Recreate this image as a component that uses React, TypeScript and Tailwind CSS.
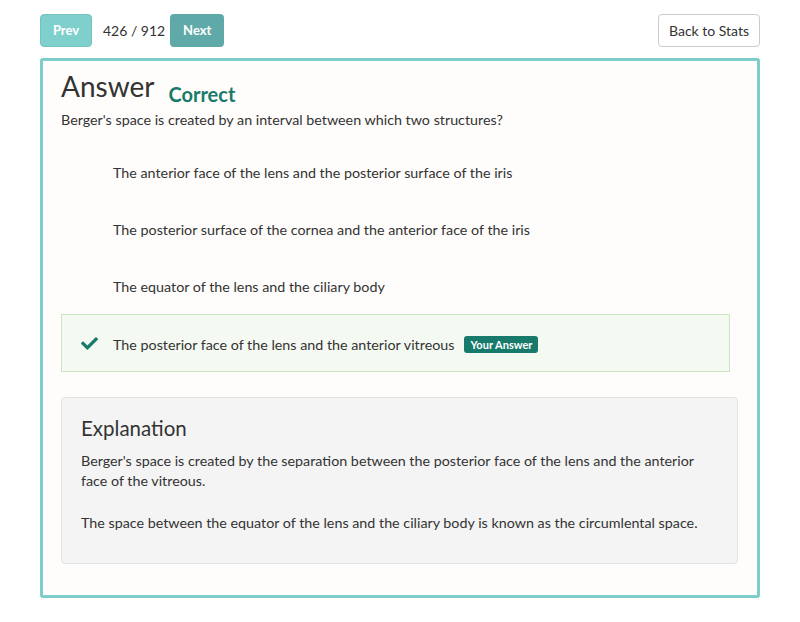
import React from "react";

const Check = ({ color }: { color: string }) => (
  <svg width="21" height="17" viewBox="0 0 512 512" className="shrink-0">
    <path fill={color} d="M173.898 439.404l-166.4-166.4c-9.997-9.997-9.997-26.206 0-36.204l36.203-36.204c9.997-9.998 26.207-9.998 36.204 0L192 312.69 432.095 72.596c9.997-9.997 26.207-9.997 36.204 0l36.203 36.204c9.997 9.997 9.997 26.206 0 36.204l-294.4 294.401c-9.998 9.997-26.207 9.997-36.204-.001z" />
  </svg>
);

export default function App() {
  const options = [
    "The anterior face of the lens and the posterior surface of the iris",
    "The posterior surface of the cornea and the anterior face of the iris",
    "The equator of the lens and the ciliary body",
  ];
  return (
    <div className="w-[800px] h-[622px] bg-white text-[#333] text-[14.3px]" style={{ fontFamily: "Lato, 'Noto Sans', sans-serif" }}>
      <div className="px-[40px] pt-[14px]">
        <div className="flex items-center h-[33px]">
          <button className="h-[33px] w-[52px] rounded-[4px] bg-[#7fcfcd] border border-[#74c3c1] text-white font-bold text-[13px] pt-[1px]">Prev</button>
          <span className="ml-[11px] mr-[5px] text-[14px] text-[#333]">426 / 912</span>
          <button className="h-[33px] w-[54px] rounded-[4px] bg-[#5faaa8] text-white font-bold text-[13px] pt-[1px]">Next</button>
          <button className="ml-auto h-[33px] w-[102px] rounded-[4px] bg-white border border-[#ccc] text-[#333] text-[14px]">Back to Stats</button>
        </div>
        <div className="mt-[11px] w-[720px] h-[540px] border-[3px] border-[#7dcdca] rounded-[3px] bg-[#fefdfb] pl-[18px] pr-[19px] pt-[8px]">
          <div className="flex items-end h-[34px]">
            <h1 className="text-[28px] leading-[34px] text-[#333]">Answer</h1>
            <span className="ml-[14px] mb-[-6px] text-[20px] font-bold text-[#187a6a]">Correct</span>
          </div>
          <p className="mt-[7px] leading-[20px]">Berger's space is created by an interval between which two structures?</p>
          <div className="mt-[14px] flex flex-col gap-[0px]">
            {options.map((o) => (
              <div key={o} className="h-[57px] flex items-center pl-[18px] gap-[13px]">
                <Check color="#fefdfb" />
                <span>{o}</span>
              </div>
            ))}
          </div>
          <div className="h-[58px] flex items-center pl-[17px] gap-[13px] bg-[#f4f9f2] border border-[#c9e6c0] mt-[-1px] w-[669px]">
            <Check color="#187a6a" />
            <span className="pt-[3px]">The posterior face of the lens and the anterior vitreous</span>
            <span className="ml-[-3px] mt-[3px] bg-[#187a6a] text-white font-bold text-[11px] leading-[17px] px-[6px] rounded-[3px]">Your Answer</span>
          </div>
          <div className="mt-[25px] h-[167px] bg-[#f4f4f4] border border-[#e3e3e3] rounded-[4px] px-[19px] pt-[16px]">
            <h2 className="text-[20.5px] leading-[28px] text-[#333]">Explanation</h2>
            <p className="mt-[9px] leading-[20px]">Berger's space is created by the separation between the posterior face of the lens and the anterior face of the vitreous.</p>
            <p className="mt-[22px] leading-[20px]">The space between the equator of the lens and the ciliary body is known as the circumlental space.</p>
          </div>
        </div>
      </div>
    </div>
  );
}
